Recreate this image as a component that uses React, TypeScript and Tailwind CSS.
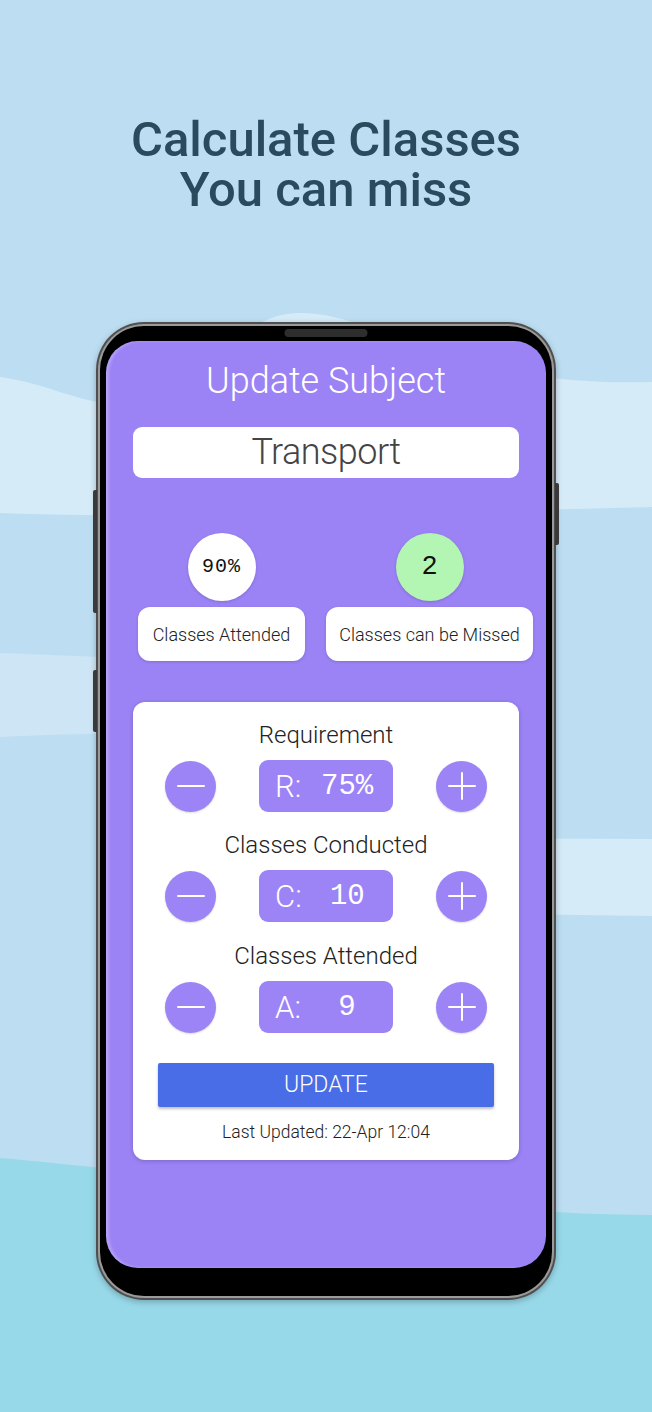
import React from "react";

const sans = { fontFamily: "Roboto, 'Open Sans', sans-serif" };
const mono = { fontFamily: "'Liberation Mono', 'DejaVu Sans Mono', monospace" };

function Minus() {
  return (
    <svg width="28" height="4" viewBox="0 0 28 4">
      <line x1="1" y1="2" x2="27" y2="2" stroke="white" strokeWidth="2" strokeLinecap="round" />
    </svg>
  );
}

function Plus() {
  return (
    <svg width="28" height="28" viewBox="0 0 28 28">
      <line x1="1" y1="14" x2="27" y2="14" stroke="white" strokeWidth="2" strokeLinecap="round" />
      <line x1="14" y1="1" x2="14" y2="27" stroke="white" strokeWidth="2" strokeLinecap="round" />
    </svg>
  );
}

function Stepper({ label, prefix, value, top }: { label: string; prefix: string; value: string; top: string }) {
  return (
    <>
      <div className={`${top} text-[24px] leading-[30px] font-light text-[#222]`}>{label}</div>
      <div className="mt-[10px] flex w-full items-center justify-between px-[32px]">
        <button className="flex h-[51px] w-[51px] items-center justify-center rounded-full bg-[#9d84f6] shadow-[0_1px_2px_rgba(0,0,0,0.15)]">
          <Minus />
        </button>
        <div className="flex h-[52px] w-[134px] items-center rounded-[9px] bg-[#9d84f6] pl-[16px] text-white">
          <span className="text-[31px] font-light leading-none">{prefix}</span>
          <span className="flex-1 text-center text-[29px] leading-none" style={mono}>
            {value}
          </span>
        </div>
        <button className="flex h-[51px] w-[51px] items-center justify-center rounded-full bg-[#9d84f6] shadow-[0_1px_2px_rgba(0,0,0,0.15)]">
          <Plus />
        </button>
      </div>
    </>
  );
}

export default function App() {
  return (
    <div className="relative h-[1412px] w-full overflow-hidden bg-[#bddef2]" style={sans}>
      <svg className="absolute inset-0 h-full w-full" viewBox="0 0 652 1412" preserveAspectRatio="none">
        <path
          d="M0,377 C50,384 80,404 120,404 C190,404 230,313 300,313 C380,313 450,388 652,382 L652,507 C450,512 200,520 0,513 Z"
          fill="#d5ebf8"
        />
        <path d="M0,653 C60,655 100,658 300,662 L300,730 C100,733 60,734 0,737 Z" fill="#cde5f4" />
        <path d="M350,838 L652,839 L652,916 L350,912 Z" fill="#d5ebf8" />
        <path d="M0,1158 C150,1170 450,1215 652,1215 L652,1412 L0,1412 Z" fill="#98d9e9" />
      </svg>

      <div className="relative flex flex-col items-center">
        <div className="pt-[115px] text-center text-[49px] font-medium text-[#2a4b5d]">
          <div className="h-[50px] leading-[50px]">Calculate Classes</div>
          <div className="h-[50px] leading-[50px]">You can miss</div>
        </div>

        <div className="relative mt-[107px] h-[978px] w-[460px] rounded-[48px] bg-[#4f4f4f] p-[2px] shadow-[0_2px_6px_rgba(0,0,0,0.25)]">
          <div className="absolute left-[-3px] top-[168px] h-[123px] w-[4px] rounded-l-[2px] bg-[#3a3a3a]" />
          <div className="absolute left-[-3px] top-[348px] h-[62px] w-[4px] rounded-l-[2px] bg-[#3a3a3a]" />
          <div className="absolute right-[-3px] top-[161px] h-[62px] w-[4px] rounded-r-[2px] bg-[#3a3a3a]" />

          <div className="h-full w-full rounded-[46px] bg-[#9a9a9a] p-[2px]">
            <div className="relative h-full w-full rounded-[44px] bg-black px-[6px] pb-[28px] pt-[15px]">
              <div className="absolute left-1/2 top-[3px] h-[8px] w-[83px] -translate-x-1/2 rounded-full bg-[#2e2e2e]" />

              <div className="flex h-full w-full flex-col items-center rounded-[32px] bg-[#9b82f5] shadow-[inset_3px_0_3px_rgba(255,255,255,0.25)]">
                <div className="pt-[18px] text-[36px] font-light leading-[44px] text-white">Update Subject</div>

                <div className="mt-[24px] flex h-[51px] w-[386px] items-center justify-center rounded-[9px] bg-white">
                  <span className="text-[36px] font-light leading-[51px] tracking-[-0.5px] text-[#444]">Transport</span>
                </div>

                <div className="mt-[55px] flex w-full gap-[21px] pl-[32px]">
                  <div className="flex w-[167px] flex-col items-center gap-[6px]">
                    <div className="flex h-[68px] w-[68px] items-center justify-center rounded-full bg-white shadow-[0_1px_3px_rgba(0,0,0,0.15)]">
                      <span className="text-[20px] tracking-[1px] text-[#111]" style={mono}>
                        90%
                      </span>
                    </div>
                    <div className="flex h-[54px] w-[167px] items-center justify-center rounded-[12px] bg-white shadow-[0_1px_3px_rgba(0,0,0,0.15)]">
                      <span className="text-[18px] font-light text-[#222]">Classes Attended</span>
                    </div>
                  </div>
                  <div className="flex w-[207px] flex-col items-center gap-[6px]">
                    <div className="flex h-[68px] w-[68px] items-center justify-center rounded-full bg-[#b3f6b4] shadow-[0_1px_3px_rgba(0,0,0,0.15)]">
                      <span className="text-[27px] text-[#111]" style={mono}>
                        2
                      </span>
                    </div>
                    <div className="flex h-[54px] w-[207px] items-center justify-center rounded-[12px] bg-white shadow-[0_1px_3px_rgba(0,0,0,0.15)]">
                      <span className="text-[18px] font-light text-[#222]">Classes can be Missed</span>
                    </div>
                  </div>
                </div>

                <div className="mt-[41px] flex h-[458px] w-[386px] flex-col items-center rounded-[12px] bg-white shadow-[0_1px_4px_rgba(0,0,0,0.2)]">
                  <Stepper label="Requirement" prefix="R:" value="75%" top="mt-[18px]" />
                  <Stepper label="Classes Conducted" prefix="C:" value="10" top="mt-[18px]" />
                  <Stepper label="Classes Attended" prefix="A:" value="9" top="mt-[19px]" />

                  <button className="mt-[30px] h-[44px] w-[336px] rounded-[2px] bg-[#486de6] text-[23px] font-light text-white shadow-[0_2px_3px_rgba(0,0,0,0.25)]">
                    UPDATE
                  </button>
                  <div className="mt-[14px] text-[17.5px] font-light leading-[22px] text-[#222]">
                    Last Updated: 22-Apr 12:04
                  </div>
                </div>
              </div>
            </div>
          </div>
        </div>
      </div>
    </div>
  );
}
